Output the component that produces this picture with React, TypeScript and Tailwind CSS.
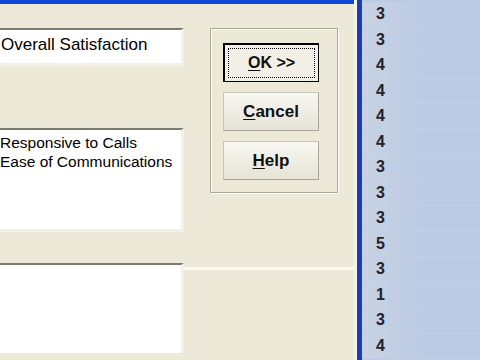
import React from "react";

const nums = ["3", "3", "4", "4", "4", "4", "3", "3", "3", "5", "3", "1", "3", "4"];

export default function App() {
  return (
    <div
      className="flex w-[480px] h-[360px] overflow-hidden bg-[#ece9d8]"
      style={{ fontFamily: '"Liberation Sans", Arial, sans-serif' }}
    >
      {/* dialog */}
      <div className="flex flex-col w-[357px] h-full border-r-[3px] border-[#f6f4ea]">
        <div className="h-[4px] bg-[#1046d8]" />
        <div className="flex flex-1">
          {/* left column with boxes */}
          <div className="flex flex-col w-[184px] pt-[24px]">
            <div className="h-[38px] w-[184px] bg-white border-t-2 border-[#7d7b70] border-r-[3px] border-r-[#f3f1e6] border-b-[3px] border-b-[#f3f1e6] pl-[1px] pt-[5px] text-[17px] leading-[20px] text-black whitespace-nowrap">
              Overall Satisfaction
            </div>
            <div className="mt-[62px] h-[104px] w-[184px] bg-white border-t-2 border-[#7d7b70] border-r-[3px] border-r-[#f3f1e6] border-b-[3px] border-b-[#f3f1e6] pt-[3px] text-[15.5px] leading-[19px] text-black whitespace-nowrap">
              <div>Responsive to Calls</div>
              <div>Ease of Communications</div>
            </div>
            <div className="mt-[31px] h-[90px] w-[184px] bg-white border-t-2 border-[#7d7b70] border-r-[3px] border-r-[#f3f1e6]" />
          </div>
          {/* right area with buttons */}
          <div className="flex flex-col flex-1">
            <div className="ml-[26px] mt-[24px] w-[128px] h-[165px] border border-[#aca899] shadow-[inset_1px_1px_0_#ffffff,1px_1px_0_#ffffff] flex flex-col items-start pl-[12px] pt-[14px] gap-[10px]">
              <div className="w-[96px] h-[39px] border border-black border-l-2 border-t-2 bg-[#f1efe6] p-[3px]">
                <div className="w-full h-full border border-dotted border-black flex items-center justify-center text-[16px] font-bold text-[#111]">
                  <span className="underline underline-offset-2">O</span>K&nbsp;&gt;&gt;
                </div>
              </div>
              <div className="w-[96px] h-[39px] border border-[#c9c6b6] border-b-[#a8a594] border-r-[#a8a594] bg-gradient-to-b from-[#f8f7f2] to-[#e6e3d6] flex items-center justify-center text-[17px] font-bold text-[#111]">
                <span className="underline underline-offset-2">C</span>ancel
              </div>
              <div className="w-[96px] h-[39px] border border-[#c9c6b6] border-b-[#a8a594] border-r-[#a8a594] bg-gradient-to-b from-[#f8f7f2] to-[#e6e3d6] flex items-center justify-center text-[17px] font-bold text-[#111]">
                <span className="underline underline-offset-2">H</span>elp
              </div>
            </div>
            <div className="mt-[74px] h-[3px] bg-[#fbf9ef]" />
          </div>
        </div>
      </div>
      {/* blue border */}
      <div className="w-[5px] h-full bg-[#1a3fb2]" />
      {/* data grid */}
      <div className="flex-1 h-full bg-[#bccbe4] pt-[2px]">
        {nums.map((n, i) => (
          <div
            key={i}
            className="h-[25.5px] flex items-center pl-[14px] border-b border-[#c2cfe6] text-[16px] font-bold text-[#22222c] bg-gradient-to-r from-[#c8d2e2] via-[#bccbe4] to-[#bccbe4]"
          >
            {n}
          </div>
        ))}
      </div>
    </div>
  );
}
